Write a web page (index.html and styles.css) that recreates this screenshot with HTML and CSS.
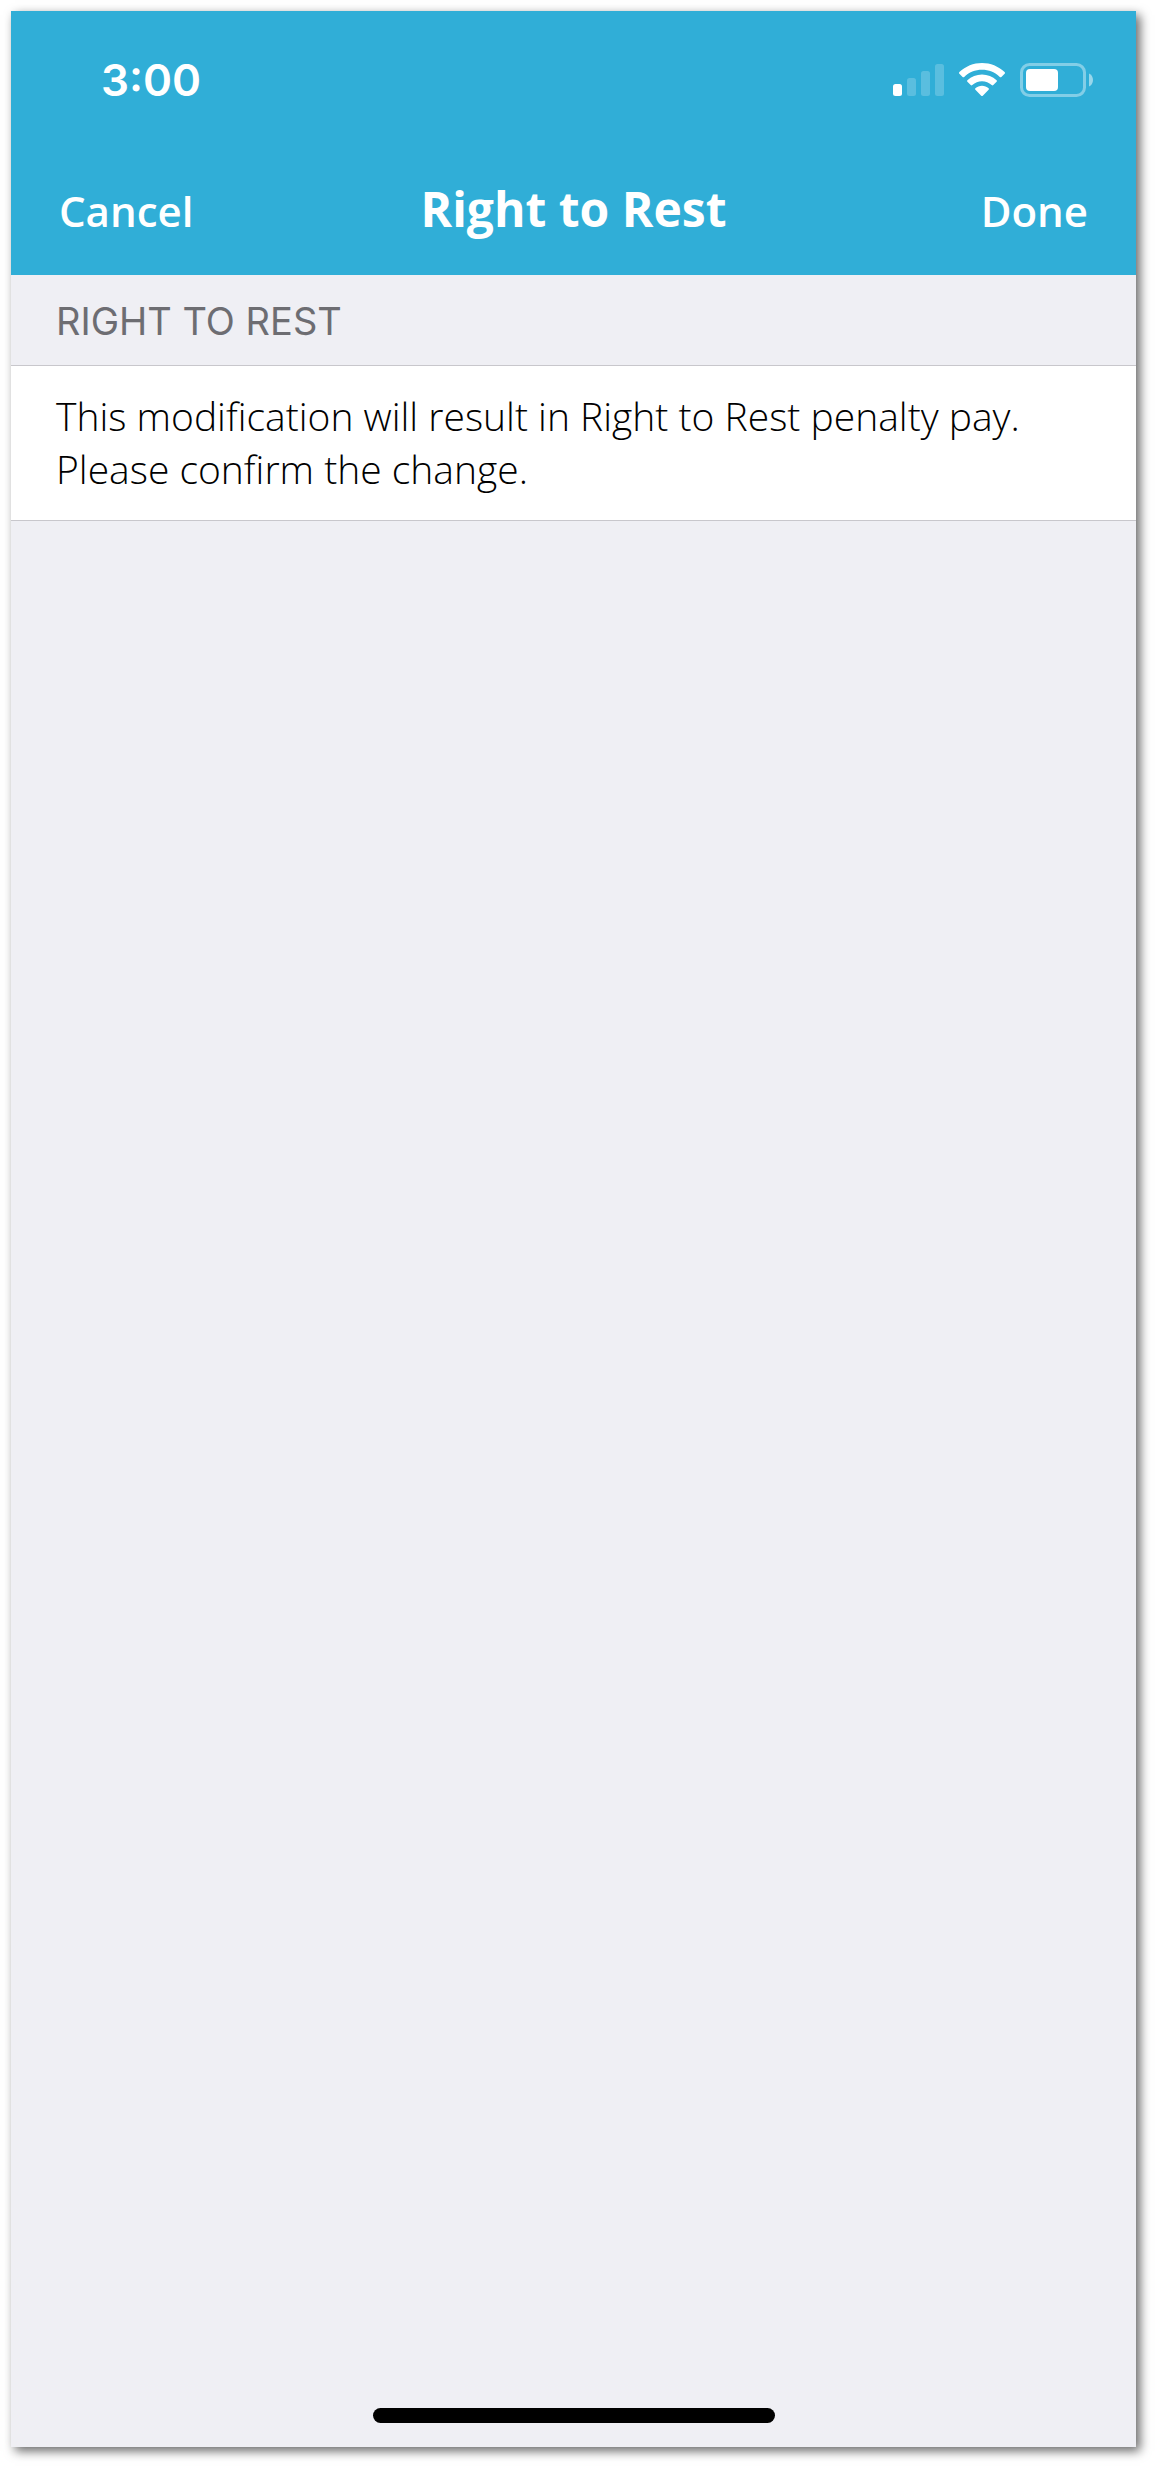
FILE: index.html
```html
<!DOCTYPE html>
<html lang="en">
<head>
<meta charset="utf-8">
<meta name="viewport" content="width=device-width, initial-scale=1">
<title>Right to Rest</title>
<link rel="stylesheet" href="styles.css">
</head>
<body>
<div class="screen">
  <header class="header">
    <div class="status-bar">
      <time class="clock">3:00</time>
      <div class="status-icons">
        <svg class="signal" width="51" height="34" viewBox="0 0 51 34" fill="#fff" role="img" aria-label="Signal strength">
          <rect x="0" y="21" width="9" height="12" rx="2.5"/>
          <g opacity=".2">
            <rect x="14" y="15" width="9" height="18" rx="2.5"/>
            <rect x="28" y="8" width="9" height="25" rx="2.5"/>
            <rect x="42" y="1" width="9" height="32" rx="2.5"/>
          </g>
        </svg>
        <svg class="wifi" width="46" height="34" viewBox="0 0 46 34" fill="#fff" role="img" aria-label="Wi-Fi">
          <path d="M.4 9.1C6.6 3.200 14.500 0 23 0s16.400 3.200 22.600 9.100q.8.800 0 1.600l-3.200 3.200q-.8.800-1.600 0C36 9.300 29.800 6.800 23 6.800S10 9.300 5.200 13.900q-.8.800-1.600 0L.4 10.700q-.8-.8 0-1.600Z"/>
          <path d="M8.400 17.200C12.400 13.500 17.500 11.400 23 11.400s10.600 2.100 14.600 5.800q.8.800 0 1.600l-3.300 3.300q-.8.700-1.600 0C30 19.700 26.700 18.300 23 18.300s-7 1.400-9.700 3.800q-.8.700-1.600 0l-3.300-3.300q-.8-.8 0-1.600Z"/>
          <path d="M16.400 25.200C18.200 23.700 20.500 22.800 23 22.800s4.800.9 6.600 2.400q.8.800 0 1.600l-5.800 5.900q-.8.700-1.600 0l-5.800-5.900q-.8-.8 0-1.600Z"/>
        </svg>
        <svg class="battery" width="73" height="34" viewBox="0 0 73 34" role="img" aria-label="Battery">
          <rect x="1.500" y="1.500" width="63" height="31" rx="8" fill="none" stroke="#fff" stroke-width="3" opacity=".4"/>
          <rect x="6" y="6" width="32" height="22" rx="4" fill="#fff"/>
          <path d="M69 10.500c2.500 1.200 4 3.600 4 6.500s-1.500 5.300-4 6.500Z" fill="#fff" opacity=".5"/>
        </svg>
      </div>
    </div>
    <nav class="nav-bar">
      <button class="nav-button" type="button">Cancel</button>
      <h1 class="nav-title">Right to Rest</h1>
      <button class="nav-button nav-button-done" type="button">Done</button>
    </nav>
  </header>
  <main class="content">
    <h2 class="section-title">RIGHT TO REST</h2>
    <p class="message">This modification will result in Right to Rest penalty pay. Please confirm the change.</p>
  </main>
  <div class="home-indicator"></div>
</div>
</body>
</html>
```
FILE: styles.css
```css
* {
  box-sizing: border-box;
}

body {
  margin: 0;
  min-height: 100vh;
  padding: 11px 19px 19px 11px;
  display: flex;
  background: #fff;
  font-family: "Open Sans", sans-serif;
}

.screen {
  flex: 1;
  display: flex;
  flex-direction: column;
  background: #efeff4;
  box-shadow: 4px 4px 10px rgba(0, 0, 0, 0.6);
}

.header {
  background: #30aed7;
  color: #fff;
}

.status-bar {
  display: flex;
  align-items: center;
  justify-content: space-between;
  height: 138px;
  padding: 0 43px 0 90px;
}

.clock {
  font: 600 44px/54px Inter, sans-serif;
}

.status-icons {
  display: flex;
  align-items: center;
  gap: 15px;
}

.nav-bar {
  display: grid;
  grid-template-columns: 1fr auto 1fr;
  align-items: baseline;
  height: 126px;
  padding: 27px 48px 0;
}

.nav-button {
  justify-self: start;
  padding: 0;
  border: 0;
  background: none;
  color: inherit;
  font: 600 42px/58px "Open Sans", sans-serif;
  cursor: pointer;
}

.nav-button-done {
  justify-self: end;
}

.nav-title {
  margin: 0;
  font-size: 48px;
  line-height: 66px;
  font-weight: 700;
}

.content {
  flex: 1;
}

.section-title {
  margin: 0;
  padding: 22px 45px 20px;
  color: #6d6d72;
  font: 400 38px/48px Inter, sans-serif;
}

.message {
  margin: 0;
  padding: 23px 45px 25px;
  border-top: 1px solid #c8c7cc;
  border-bottom: 1px solid #c8c7cc;
  background: #fff;
  color: #000;
  font-size: 39px;
  line-height: 53px;
  font-weight: 300;
}

.home-indicator {
  align-self: center;
  width: 402px;
  height: 15px;
  margin-bottom: 24px;
  border-radius: 8px;
  background: #000;
}
```
